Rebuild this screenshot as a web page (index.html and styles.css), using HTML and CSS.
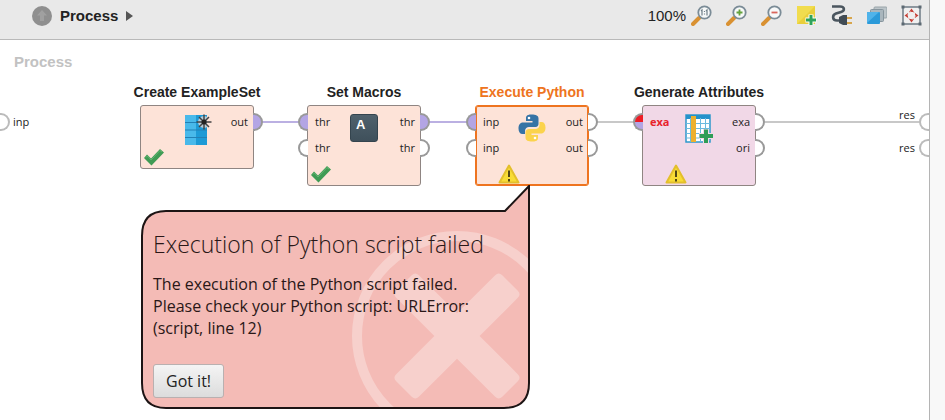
FILE: index.html
```html
<!DOCTYPE html>
<html lang="en">
<head>
    <meta charset="UTF-8">
    <meta name="viewport" content="width=device-width, initial-scale=1.0">
    <title>Process</title>
    <link rel="stylesheet" href="styles.css">
</head>
<body>

    <!-- shared symbols -->
    <svg class="symbols" aria-hidden="true">
        <symbol id="check" viewBox="0 0 22 18">
            <path d="M1 10 L4 6.500 L8 10.500 L17 1 L21 4.500 L8.500 17.500 Z" fill="#3f9b54"/>
            <path d="M3 9.500 L4.500 8 L8 12 L17 2.500 L19 4" fill="none" stroke="#63b673"/>
        </symbol>
        <symbol id="warning" viewBox="0 0 22 20">
            <path d="M11 1.500 L20.500 18.500 H1.500 Z" fill="#f8dc36" stroke="#e3bf2c" stroke-width="2" stroke-linejoin="round"/>
            <path d="M11 6.500 V13 M11 15 V17.500" stroke="#514614" stroke-width="2"/>
        </symbol>
        <symbol id="lens" viewBox="0 0 21 21">
            <path d="M8 13 L2 19" stroke="#d99132" stroke-width="4" stroke-linecap="round"/>
            <circle cx="13.500" cy="7.500" r="6.200" fill="#f7f9f9" stroke="#7b8c97" stroke-width="1.800"/>
        </symbol>
    </svg>

    <div class="panel">
        <header class="toolbar">
            <button class="icon-btn up" aria-label="Up">
                <svg width="20" height="20" viewBox="0 0 20 20">
                    <circle cx="10" cy="10" r="10" fill="#8f8f8f"/>
                    <path d="M10 4 L15 9.500 H12 V15 H8 V9.500 H5 Z" fill="#a0a0a0"/>
                </svg>
            </button>
            <a class="crumb" href="#">Process</a>
            <svg class="arrow" width="7" height="12" viewBox="0 0 7 12"><path d="M0 1 L7 6 L0 11 Z" fill="#555"/></svg>

            <div class="tools">
                <span class="zoom">100%</span>
                <button class="icon-btn" aria-label="Reset zoom">
                    <svg width="21" height="21" viewBox="0 0 21 21">
                        <use href="#lens"/>
                        <path d="M10 6 L11 5 V10.500 M15 6 L16 5 V10.500 M13.500 6 V7 M13.500 8.500 V9.500" fill="none" stroke="#6f7f89" stroke-width="1.200"/>
                    </svg>
                </button>
                <button class="icon-btn" aria-label="Zoom in">
                    <svg width="21" height="21" viewBox="0 0 21 21">
                        <use href="#lens"/>
                        <path d="M10.500 7.500 H16.500 M13.500 4.500 V10.500" stroke="#63a23c" stroke-width="1.800"/>
                    </svg>
                </button>
                <button class="icon-btn" aria-label="Zoom out">
                    <svg width="21" height="21" viewBox="0 0 21 21">
                        <use href="#lens"/>
                        <path d="M10.500 7.500 H16.500" stroke="#d9655b" stroke-width="1.800"/>
                    </svg>
                </button>
                <button class="icon-btn" aria-label="Add note">
                    <svg width="21" height="21" viewBox="0 0 21 21">
                        <path d="M1 1 H19 V19 H1 Z" fill="#f1dc4e"/>
                        <path d="M1 19 L19 1 V19 Z" fill="#e9cf3a"/>
                        <path d="M15 9.500 V20 M9.500 15 H20.500" stroke="#fff" stroke-width="5"/>
                        <path d="M15 10 V20 M10 15 H20" stroke="#2fa35a" stroke-width="3"/>
                    </svg>
                </button>
                <button class="icon-btn" aria-label="Auto wire">
                    <svg width="21" height="21" viewBox="0 0 21 21">
                        <path d="M1 1.500 H9 C14 1.500 14 6 10 7 L5 8.500 C1 10 1 15.500 6 15.500 H9" fill="none" stroke="#4b565f" stroke-width="2.600"/>
                        <path d="M8 12 L12 10 H16 V20 H12 L8 18 Z" fill="#414c55"/>
                        <path d="M16 13 H21 M16 18 H21" stroke="#d8a64c" stroke-width="1.800"/>
                    </svg>
                </button>
                <button class="icon-btn" aria-label="Arrange order">
                    <svg width="21" height="21" viewBox="0 0 21 21">
                        <rect x="8" y="2" width="13" height="11" rx="1" fill="#bcc5c9" stroke="#99a4a9"/>
                        <rect x="4.500" y="4.500" width="13" height="12" rx="1" fill="#a9b6bd" stroke="#87959d"/>
                        <rect x="1" y="7" width="13" height="12" rx="1" fill="#2b9ad9"/>
                        <path d="M1 18 V8 Q1 7 2 7 H13 Z" fill="#4fb3ea"/>
                    </svg>
                </button>
                <button class="icon-btn" aria-label="Fit to screen">
                    <svg width="21" height="21" viewBox="0 0 21 21">
                        <rect x="2" y="2" width="17" height="17" fill="#f0f0f0" stroke="#6d7b85" stroke-width="1.500"/>
                        <path d="M0.500 0.500 h3 v3 h-3 Z M17.500 0.500 h3 v3 h-3 Z M0.500 17.500 h3 v3 h-3 Z M17.500 17.500 h3 v3 h-3 Z" fill="#5c6972"/>
                        <path d="M10.500 3.500 L13 7 H8 Z M10.500 17.500 L13 14 H8 Z M3.500 10.500 L7 8 V13 Z M17.500 10.500 L14 8 V13 Z" fill="#c74138"/>
                        <circle cx="10.500" cy="10.500" r="4" fill="none" stroke="#dfa59f" stroke-dasharray="2 2"/>
                    </svg>
                </button>
            </div>
        </header>

        <main class="canvas">
            <h1 class="canvas-title">Process</h1>

            <svg class="wires" aria-hidden="true">
                <line class="wire data" x1="260" y1="82" x2="300" y2="82"/>
                <line class="wire data" x1="428" y1="82" x2="468" y2="82"/>
                <line class="wire" x1="597" y1="82" x2="636" y2="82"/>
                <line class="wire" x1="765" y1="82" x2="99%" y2="82"/>
            </svg>

            <div class="edge source">
                <div class="port in"><i class="dot"></i>inp</div>
            </div>

            <div class="node create">
                <h2>Create ExampleSet</h2>
                <div class="box">
                    <svg class="icon" width="30" height="32" viewBox="0 0 30 32">
                        <path d="M3 1 H25 V31 H3 Z" fill="#49b9ea"/>
                        <path d="M14 1 H25 V31 H14 Z" fill="#1d9ad6"/>
                        <path d="M3 8.500 H25 M3 16 H25 M3 23.500 H25" stroke="#2280b5"/>
                        <circle cx="22" cy="8" r="6" fill="#fde3d8" opacity="0.700"/>
                        <path d="M22 0.500 V15.500 M14.500 8 H29.500 M17 3 L27 13 M27 3 L17 13" stroke="#444" stroke-width="1.500"/>
                        <circle cx="22" cy="8" r="2.500" fill="#222"/>
                    </svg>
                    <div class="ports right">
                        <div class="port out filled">out<i class="dot"></i></div>
                    </div>
                    <svg class="status" width="22" height="18"><use href="#check"/></svg>
                </div>
            </div>

            <div class="node macros">
                <h2>Set Macros</h2>
                <div class="box">
                    <div class="ports">
                        <div class="port in filled"><i class="dot"></i>thr</div>
                        <div class="port in"><i class="dot"></i>thr</div>
                    </div>
                    <div class="icon key"><b>A</b></div>
                    <div class="ports right">
                        <div class="port out filled">thr<i class="dot"></i></div>
                        <div class="port out">thr<i class="dot"></i></div>
                    </div>
                    <svg class="status" width="22" height="18"><use href="#check"/></svg>
                </div>
            </div>

            <div class="node python selected">
                <h2>Execute Python</h2>
                <div class="box">
                    <div class="ports">
                        <div class="port in filled"><i class="dot"></i>inp</div>
                        <div class="port in"><i class="dot"></i>inp</div>
                    </div>
                    <svg class="icon" width="28" height="28" viewBox="0 0 28 28">
                        <path d="M13.500 0.500 C8 0.500 8 3 8 4.500 V7 H14.500 V8.500 H5 C2 8.500 0.500 11 0.500 14.500 C0.500 18 2 20 4.500 20 H7 V17 C7 14.500 9 13 11 13 H17.500 C19.500 13 20.500 11.500 20.500 10 V4.500 C20.500 1.500 18 0.500 13.500 0.500 Z" fill="#3673a5"/>
                        <path d="M14.500 27.500 C20 27.500 20 25 20 23.500 V21 H13.500 V19.500 H23 C26 19.500 27.500 17 27.500 13.500 C27.500 10 26 8 23.500 8 H21.500 V11 C21.500 13.500 19.500 15 17.500 15 H11 C9 15 7.500 16.500 7.500 18 V23.500 C7.500 26.500 10 27.500 14.500 27.500 Z" fill="#fbd34c"/>
                        <circle cx="11" cy="4" r="1.300" fill="#fff"/>
                        <circle cx="17" cy="24" r="1.300" fill="#fff"/>
                    </svg>
                    <div class="ports right">
                        <div class="port out">out<i class="dot"></i></div>
                        <div class="port out">out<i class="dot"></i></div>
                    </div>
                    <svg class="status warn" width="22" height="20"><use href="#warning"/></svg>
                </div>
            </div>

            <div class="node attributes">
                <h2>Generate Attributes</h2>
                <div class="box">
                    <div class="ports">
                        <div class="port in error"><i class="dot"></i>exa</div>
                    </div>
                    <svg class="icon" width="28" height="30" viewBox="0 0 28 30">
                        <rect x="1" y="1" width="24" height="27" fill="#fff" stroke="#2e98cc" stroke-width="1.500"/>
                        <path d="M1 3 H25" stroke="#2592cb" stroke-width="4"/>
                        <path d="M1 9.500 H25 M1 14.500 H25 M1 19.500 H25 M1 24 H25 M5.500 4 V28 M15.500 4 V28 M20.500 4 V28" stroke="#6cbbdf"/>
                        <path d="M6 2 H11 V28 H6 Z" fill="#edb02f"/>
                        <path d="M21 15 V29 M14 22 H28" stroke="#f2d9e7" stroke-width="6"/>
                        <path d="M21 15.500 V29 M14.500 22 H28" stroke="#2f9d56" stroke-width="4"/>
                    </svg>
                    <div class="ports right">
                        <div class="port out">exa<i class="dot"></i></div>
                        <div class="port out">ori<i class="dot"></i></div>
                    </div>
                    <svg class="status warn" width="22" height="20"><use href="#warning"/></svg>
                </div>
            </div>

            <div class="edge results">
                <div class="port out raised">res<i class="dot"></i></div>
                <div class="port out">res<i class="dot"></i></div>
            </div>

            <section class="bubble" role="alertdialog" aria-labelledby="bubble-title">
                <svg class="bubble-shape" width="390" height="226" viewBox="0 0 390 226" aria-hidden="true">
                    <defs>
                        <clipPath id="bubble-clip">
                            <path d="M25 26 H364 L388 1 V198 Q388 223 363 223 H25 Q1 223 1 198 V51 Q1 26 25 26 Z"/>
                        </clipPath>
                    </defs>
                    <path d="M25 26 H364 L388 1 V198 Q388 223 363 223 H25 Q1 223 1 198 V51 Q1 26 25 26 Z" fill="#f4bbb6"/>
                    <g clip-path="url(#bubble-clip)" fill="#f7d0cc">
                        <circle cx="316" cy="151" r="100" fill="none" stroke="#f7d0cc" stroke-width="10"/>
                        <g transform="rotate(45 316 151)">
                            <path d="M246 135 H300 V81 Q300 76 305 76 H327 Q332 76 332 81 V135 H386 Q391 135 391 140 V162 Q391 167 386 167 H332 V221 Q332 226 327 226 H305 Q300 226 300 221 V167 H246 Q241 167 241 162 V140 Q241 135 246 135 Z"/>
                        </g>
                    </g>
                    <path d="M25 26 H364 L388 1 V198 Q388 223 363 223 H25 Q1 223 1 198 V51 Q1 26 25 26 Z" fill="none" stroke="#1c1414" stroke-width="2"/>
                </svg>
                <div class="bubble-body">
                    <h3 id="bubble-title">Execution of Python script failed</h3>
                    <p>The execution of the Python script failed.<br>Please check your Python script: URLError:<br>(script, line 12)</p>
                    <button class="got-it">Got it!</button>
                </div>
            </section>
        </main>
    </div>

</body>
</html>
```
FILE: styles.css
```css
body {
    margin: 0;
    min-height: 100vh;
    display: flex;
    background-color: #f8f8f8;
    color: #222;
    font-family: "Liberation Sans", Arial, sans-serif;
}

h1, h2, h3, p {
    margin: 0;
}

.symbols {
    position: absolute;
    width: 0;
    height: 0;
}

.panel {
    flex: 1;
    display: flex;
    flex-direction: column;
    margin-right: 15px;
    border-right: 1px solid #b4b4b4;
    background: white;
}

/* Toolbar */
.toolbar {
    display: flex;
    align-items: center;
    height: 31px;
    padding: 0 7px 8px 32px;
    background: #e9e9e9;
    border-bottom: 1px solid #b9b9b9;
}

.icon-btn {
    display: flex;
    padding: 0;
    border: none;
    background: none;
    cursor: pointer;
}

.crumb {
    margin: 0 8px;
    font-size: 15px;
    font-weight: bold;
    color: #222;
    text-decoration: none;
}

.tools {
    display: flex;
    align-items: center;
    gap: 14px;
    margin-left: auto;
}

.zoom {
    margin-right: -9px;
    font-size: 15px;
}

/* Canvas */
.canvas {
    position: relative;
    flex: 1;
}

.canvas-title {
    padding: 13px 14px;
    font-size: 15px;
    line-height: 18px;
    color: #c2c2c2;
}

.wires {
    position: absolute;
    top: 0;
    left: 0;
    width: 100%;
    height: 100%;
}

.wire {
    stroke: #c8c8c8;
    stroke-width: 2;
}

.wire.data {
    stroke: #bbb0e2;
}

/* Operators */
.node {
    position: absolute;
    top: 44px;
    width: 114px;
    display: flex;
    flex-direction: column;
    align-items: center;
}

.create { left: 140px; }
.macros { left: 307px; }
.python { left: 475px; }
.attributes { left: 642px; }

.node h2 {
    margin-bottom: 5px;
    font-size: 14px;
    line-height: 16px;
    white-space: nowrap;
}

.box {
    position: relative;
    box-sizing: border-box;
    width: 100%;
    height: 81px;
    display: flex;
    justify-content: center;
    border: 1px solid #8f8582;
    border-radius: 3px;
    background: #fde3d8;
}

.create .box {
    height: 64px;
}

.attributes .box {
    background: #f1d8e7;
}

.selected h2 {
    color: #ee7420;
}

.selected .box {
    border-color: #ee7420;
    box-shadow: inset 0 0 0 1px #ee7420;
}

.icon {
    margin-top: 8px;
}

.key {
    width: 26px;
    height: 26px;
    border: 1px solid #34444e;
    border-radius: 3px;
    background: linear-gradient(#4f616c, #3f505b);
    color: white;
    font-size: 13px;
    line-height: 20px;
    text-indent: 5px;
}

.status {
    position: absolute;
    left: 2px;
    bottom: 2px;
}

.status.warn {
    left: 22px;
    bottom: 1px;
}

/* Ports */
.ports {
    position: absolute;
    top: 7px;
    left: 0;
    display: grid;
    gap: 8px;
}

.ports.right {
    left: auto;
    right: 0;
}

.port {
    position: relative;
    padding: 0 5px 0 7px;
    font-family: "Open Sans", sans-serif;
    font-size: 11px;
    line-height: 18px;
    text-align: right;
}

.dot {
    position: absolute;
    top: 0;
    left: 100%;
    box-sizing: border-box;
    width: 10px;
    height: 18px;
    border: 2px solid #999;
    border-left: none;
    border-radius: 0 9px 9px 0;
    background: white;
}

.in .dot {
    left: auto;
    right: 100%;
    transform: scaleX(-1);
}

.filled .dot {
    background: #b3a5e4;
}

.error {
    color: #e8232b;
    font-weight: bold;
}

.error .dot {
    background: linear-gradient(#ee1c25 50%, #b3a5e4 50%);
}

.edge {
    position: absolute;
    top: 73px;
    display: grid;
    gap: 8px;
}

.edge .dot {
    border-color: #bbb;
}

.source {
    left: 0;
}

.source .port {
    padding-left: 13px;
}

.source .dot {
    left: 0;
    right: auto;
    transform: none;
}

.results {
    right: 0;
}

.results .port {
    padding-right: 14px;
}

.results .dot {
    left: auto;
    right: 0;
    transform: scaleX(-1);
}

.results .raised {
    height: 18px;
    line-height: 4px;
}

/* Error bubble */
.bubble {
    position: absolute;
    top: 145px;
    left: 141px;
    width: 390px;
    color: #2a1717;
    font-family: "Open Sans", sans-serif;
}

.bubble-shape {
    position: absolute;
    top: 0;
    left: 0;
}

.bubble-body {
    position: relative;
    padding: 44px 12px 0;
}

.bubble h3 {
    font-size: 23px;
    font-weight: 300;
    line-height: 30px;
    white-space: nowrap;
}

.bubble p {
    margin: 14px 0 25px;
    font-size: 16px;
    line-height: 22px;
    white-space: nowrap;
}

.got-it {
    padding: 5px 12px;
    border: 1px solid #b9b0b0;
    border-radius: 3px;
    background: linear-gradient(#f4f4f4, #dcdcdc);
    color: #222;
    font-family: inherit;
    font-size: 16px;
    line-height: 22px;
    cursor: pointer;
}
```
